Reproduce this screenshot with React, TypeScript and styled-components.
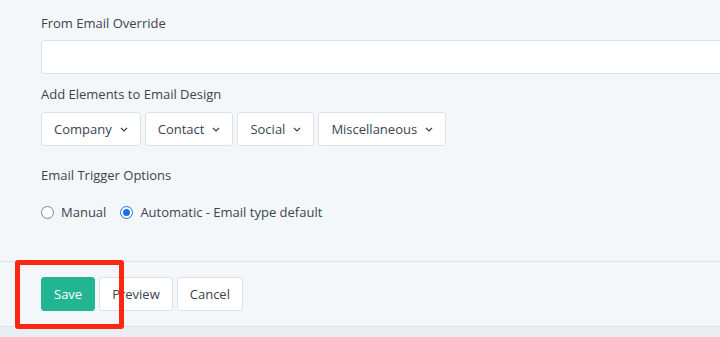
import styled, { createGlobalStyle } from 'styled-components';

const GlobalStyle = createGlobalStyle`
  html, body {
    margin: 0;
    padding: 0;
    background-color: #e9eef3;
    overflow: hidden;
  }
  body {
    font-family: 'Open Sans', 'Liberation Sans', sans-serif;
    font-size: 13px;
    color: #3b4350;
  }
`;

// 전체 페이지
const Page = styled.div`
  position: relative;
  width: 720px;
  height: 337px;
  background-color: #e9eef3;
`;

// 폼 영역
const FormArea = styled.div`
  background-color: #f4f7fa;
  padding: 14px 0 40px 41px;
`;

const Label = styled.div<{ $gap?: number }>`
  line-height: 18px;
  margin-bottom: ${(p) => p.$gap ?? 9}px;
`;

const TextInput = styled.input`
  display: block;
  box-sizing: border-box;
  width: 700px;
  height: 34px;
  margin-bottom: 11px;
  border: 1px solid #dde2e7;
  border-radius: 3px;
  background-color: #ffffff;
  outline: none;
`;

const ButtonRow = styled.div<{ $gap?: number }>`
  display: flex;
  gap: ${(p) => p.$gap ?? 4}px;
`;

const Button = styled.button<{ $primary?: boolean }>`
  display: inline-flex;
  align-items: center;
  gap: 8px;
  box-sizing: border-box;
  height: 34px;
  padding: 0 12px;
  font-family: inherit;
  font-size: 13px;
  color: ${(p) => (p.$primary ? '#ffffff' : '#3b4350')};
  background-color: ${(p) => (p.$primary ? '#23b591' : '#ffffff')};
  border: 1px solid ${(p) => (p.$primary ? '#23b591' : '#dde2e7')};
  border-radius: 3px;
  cursor: pointer;
`;

const DropdownRow = styled(ButtonRow)`
  margin-bottom: 20px;
`;

const RadioRow = styled.div`
  display: flex;
  align-items: center;
  height: 18px;
  margin-top: 19px;
`;

const RadioOption = styled.label`
  display: inline-flex;
  align-items: center;
  gap: 7px;
  margin-right: 14px;
`;

// 라디오 버튼 동그라미
const RadioDot = styled.span<{ $checked?: boolean }>`
  position: relative;
  box-sizing: border-box;
  width: 13px;
  height: 13px;
  border-radius: 50%;
  background-color: #ffffff;
  border: ${(p) => (p.$checked ? '1.5px solid #1b6fe3' : '1px solid #7d838b')};

  &::after {
    content: '';
    display: ${(p) => (p.$checked ? 'block' : 'none')};
    position: absolute;
    top: 50%;
    left: 50%;
    width: 7px;
    height: 7px;
    margin: -3.5px 0 0 -3.5px;
    border-radius: 50%;
    background-color: #1b6fe3;
  }
`;

// 하단 버튼 영역
const Footer = styled.div`
  background-color: #f4f7fa;
  border-top: 1px solid #dde2e7;
  border-bottom: 1px solid #dde2e7;
  padding: 15px 0 15px 41px;
`;

// 빨간 강조 박스
const Highlight = styled.div`
  position: absolute;
  left: 15px;
  top: 260px;
  width: 109px;
  height: 69px;
  box-sizing: border-box;
  border: 5px solid #fd2613;
  border-radius: 3px;
  pointer-events: none;
`;

function Chevron() {
  return (
    <svg width="8" height="5" viewBox="0 0 8 5" fill="none">
      <polyline points="1,1 4,4 7,1" stroke="#3b4350" strokeWidth="1.2" />
    </svg>
  );
}

const menus = ['Company', 'Contact', 'Social', 'Miscellaneous'];

function App() {
  return (
    <Page>
      <GlobalStyle />
      <FormArea>
        <Label $gap={8}>From Email Override</Label>
        <TextInput />
        <Label>Add Elements to Email Design</Label>
        <DropdownRow>
          {menus.map((m) => (
            <Button key={m}>
              {m}
              <Chevron />
            </Button>
          ))}
        </DropdownRow>
        <Label $gap={0}>Email Trigger Options</Label>
        <RadioRow>
          <RadioOption>
            <RadioDot />
            Manual
          </RadioOption>
          <RadioOption>
            <RadioDot $checked />
            Automatic - Email type default
          </RadioOption>
        </RadioRow>
      </FormArea>
      <Footer>
        <ButtonRow>
          <Button $primary>Save</Button>
          <Button>Preview</Button>
          <Button>Cancel</Button>
        </ButtonRow>
      </Footer>
      <Highlight />
    </Page>
  );
}

export default App;
